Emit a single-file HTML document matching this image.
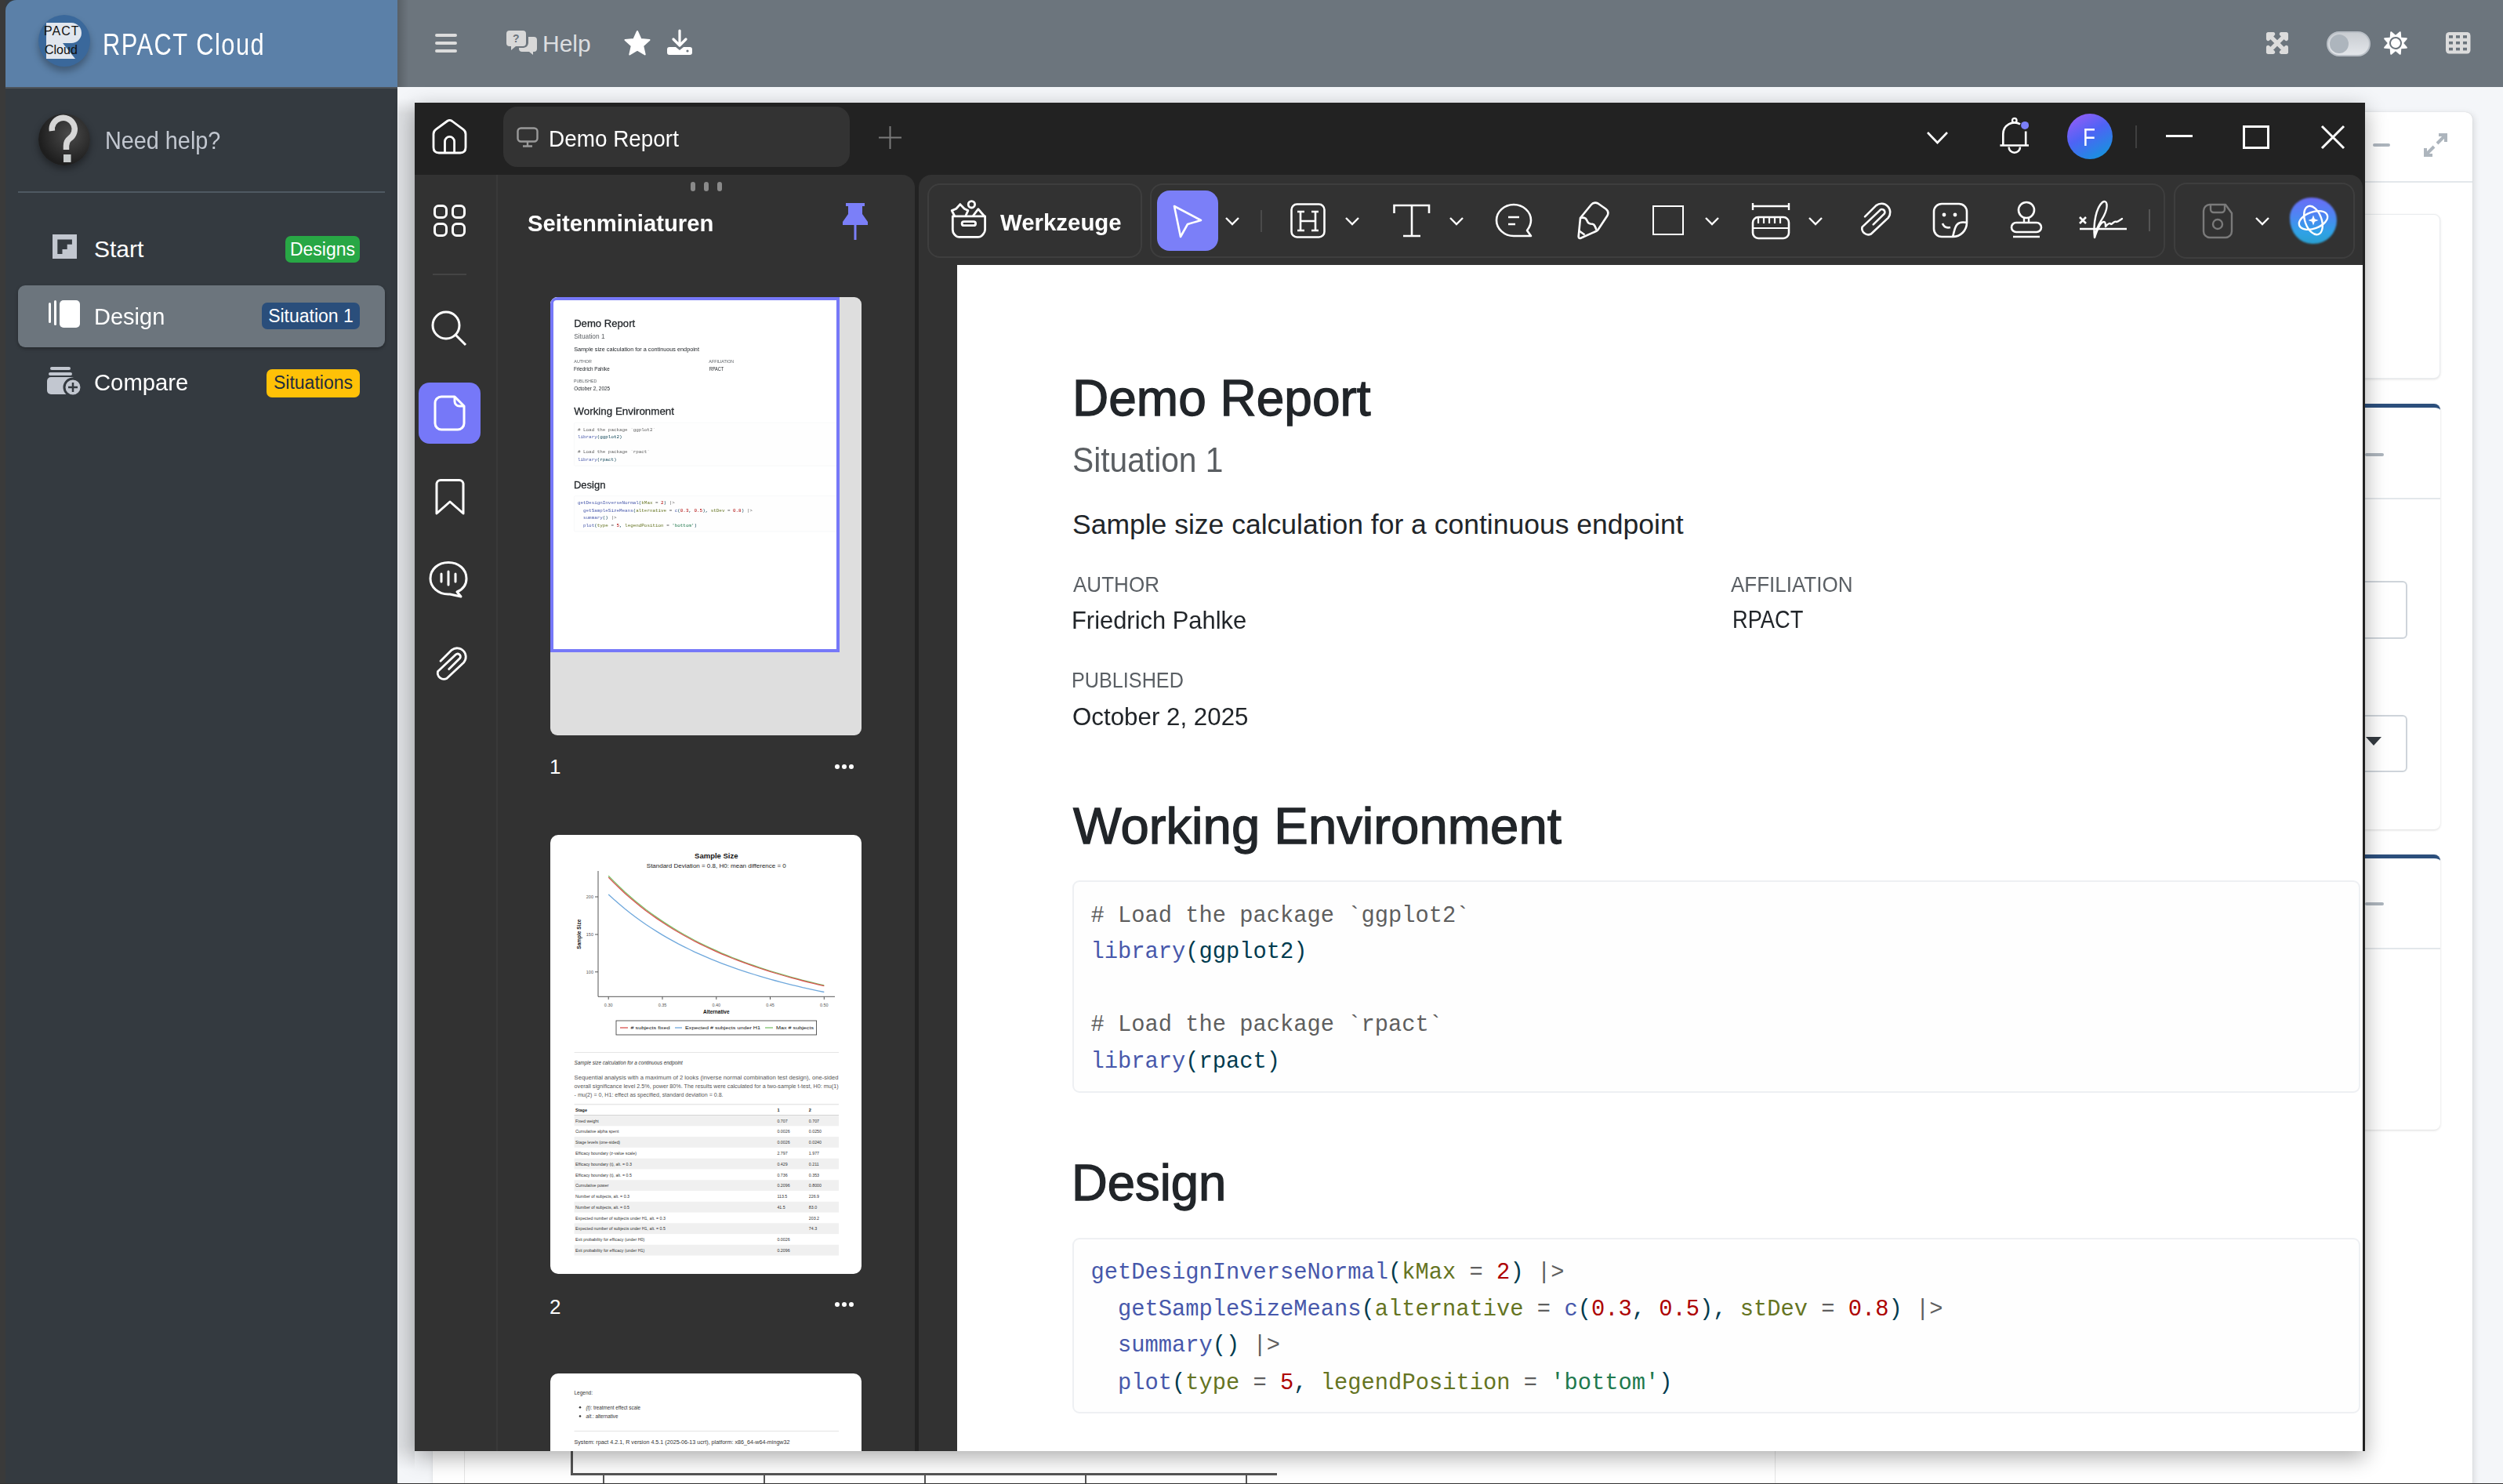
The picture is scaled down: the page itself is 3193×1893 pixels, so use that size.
<!DOCTYPE html>
<html><head><meta charset="utf-8">
<style>
*{box-sizing:border-box;margin:0;padding:0}
html,body{width:3193px;height:1893px;overflow:hidden}
body{position:relative;background:#f4f6f9;font-family:"Liberation Sans",sans-serif}
.a{position:absolute}
.t{position:absolute;white-space:nowrap;line-height:1}
.mono{font-family:"Liberation Mono",monospace}
svg{position:absolute;overflow:visible}
.badge{position:absolute;border-radius:7px;font-size:23px;line-height:34px;text-align:center;color:#fff}
</style></head><body>
<!-- left strip -->
<div class="a" style="left:0;top:0;width:8px;height:1893px;background:#3a3a3a"></div>
<!-- sidebar -->
<div class="a" style="left:7px;top:0;width:500px;height:1893px;background:#343a40"></div>
<div class="a" style="left:7px;top:0;width:500px;height:111px;background:#5b80a8;border-top-left-radius:14px"></div>
<div class="a" style="left:7px;top:111px;width:500px;height:2px;background:#4d5359"></div>
<!-- logo -->
<div class="a" style="left:49px;top:19px;width:66px;height:66px;border-radius:50%;background:#3a689b;box-shadow:0 6px 10px rgba(0,0,0,.3);overflow:hidden">
  <svg width="66" height="66" style="left:0;top:0"><path d="M10 10 H42 A13 13 0 0 1 42 36 H31 L47 56 H10 Z" fill="#e1e6ee"/></svg>
  <div class="t" style="left:7px;top:13px;font-size:16px;color:#111;letter-spacing:1px">PACT</div>
  <div class="t" style="left:8px;top:37px;font-size:16px;color:#111">Cloud</div>
</div>
<div class="t" style="left:131px;top:37px;font-size:39px;color:#fff;letter-spacing:1.9px;transform:scaleX(.79);transform-origin:0 0">RPACT Cloud</div>
<!-- need help -->
<div class="a" style="left:49px;top:145px;width:66px;height:66px;border-radius:50%;background:radial-gradient(circle at 60% 40%,#4a4a4a,#1e1e1e 70%);box-shadow:0 4px 10px rgba(0,0,0,.4)"></div>
<svg width="66" height="66" style="left:49px;top:145px"><path d="M17.4 22 A14.5 14.5 0 1 1 39.5 32 Q35.5 35 35.5 41 V46" fill="none" stroke="#d6d6d6" stroke-width="7.5"/><rect x="32" y="52" width="9.5" height="10" fill="#c8cccc"/></svg>
<div class="t" style="left:134px;top:163px;font-size:32px;color:#c2c7d0;transform:scaleX(.9);transform-origin:0 0">Need help?</div>
<div class="a" style="left:23px;top:244px;width:468px;height:2px;background:#4f5962"></div>
<!-- nav items -->
<svg width="32" height="32" style="left:67px;top:299px"><rect x="0" y="0" width="31" height="31" fill="#c2c7d0"/><path d="M6.3 6.5 H24.9 V12.7 H18.7 V18.9 H12.5 V25 H6.3 Z" fill="#343a40"/></svg>
<div class="t" style="left:120px;top:303px;font-size:30px;color:#fff">Start</div>
<div class="badge" style="left:364px;top:301px;width:95px;background:#28a745">Designs</div>

<div class="a" style="left:23px;top:364px;width:468px;height:79px;border-radius:9px;background:#6c757d;box-shadow:0 2px 4px rgba(0,0,0,.3)"></div>
<svg width="42" height="36" style="left:62px;top:383px"><rect x="0" y="3" width="3" height="26" rx="1.5" fill="#fff"/><rect x="7" y="0" width="3" height="32" rx="1.5" fill="#fff"/><rect x="14" y="0" width="26" height="35" rx="5" fill="#fff"/></svg>
<div class="t" style="left:120px;top:389px;font-size:30px;color:#fff;transform:scaleX(.967);transform-origin:0 0">Design</div>
<div class="badge" style="left:334px;top:386px;width:125px;background:#2a4e7b">Situation 1</div>

<svg width="46" height="36" style="left:60px;top:468px"><rect x="4" y="0" width="26" height="4" rx="2" fill="#c2c7d0"/><rect x="2" y="7" width="30" height="4" rx="2" fill="#c2c7d0"/><rect x="0" y="13" width="36" height="22" rx="5" fill="#c2c7d0"/><circle cx="33" cy="26" r="11" fill="#c2c7d0" stroke="#343a40" stroke-width="3"/><path d="M33 20 V32 M27 26 H39" stroke="#343a40" stroke-width="2.5"/></svg>
<div class="t" style="left:120px;top:473px;font-size:30px;color:#fff;transform:scaleX(.975);transform-origin:0 0">Compare</div>
<div class="badge" style="left:340px;top:471px;width:119px;height:36px;background:#ffc107;color:#1f2d3d">Situations</div>

<!-- top nav -->
<div class="a" style="left:507px;top:0;width:2686px;height:111px;background:#6c757d"></div>
<div class="a" style="left:507px;top:0;width:14px;height:111px;background:linear-gradient(90deg,rgba(0,0,0,.18),rgba(0,0,0,0))"></div>
<svg width="28" height="24" style="left:555px;top:43px"><path d="M2 2 H26 M2 12 H26 M2 22 H26" stroke="#dcdcdc" stroke-width="4" stroke-linecap="round"/></svg>
<svg width="40" height="32" style="left:646px;top:39px"><path d="M4 0 H21 A4 4 0 0 1 25 4 V16 A4 4 0 0 1 21 20 H12 L6 25 V20 H4 A4 4 0 0 1 0 16 V4 A4 4 0 0 1 4 0Z" fill="#d8d8d8"/><path d="M28 8 H35 A4 4 0 0 1 39 12 V23 A4 4 0 0 1 35 27 H34 V31 L29 27 H20 A4 4 0 0 1 16 23 V22 H22 A7 7 0 0 0 28 16Z" fill="#d8d8d8"/><text x="8" y="15" font-size="14" font-weight="bold" fill="#6c757d" font-family="Liberation Sans">?</text></svg>
<div class="t" style="left:692px;top:41px;font-size:30px;color:#dcdee0">Help</div>
<svg width="34" height="32" style="left:796px;top:39px"><path d="M17 1 L21.5 11 L32.5 12 L24.2 19.4 L26.7 30.5 L17 24.6 L7.3 30.5 L9.8 19.4 L1.5 12 L12.5 11 Z" fill="#fff" stroke="#fff" stroke-width="2" stroke-linejoin="round"/></svg>
<svg width="34" height="32" style="left:851px;top:39px"><path d="M16 0 V18 M8 11 L16 19 L24 11" stroke="#fff" stroke-width="3.2" fill="none" stroke-linecap="round" stroke-linejoin="round"/><path d="M3 21 H11 L16 25 L21 21 H29 A3 3 0 0 1 32 24 V28 A3 3 0 0 1 29 31 H3 A3 3 0 0 1 0 28 V24 A3 3 0 0 1 3 21Z" fill="#fff"/><circle cx="26" cy="26" r="1.6" fill="#6c757d"/></svg>
<!-- right nav icons -->
<svg width="28" height="28" viewBox="-16 16 480 480" style="left:2891px;top:41px"><path fill="#dcdcdc" stroke="#dcdcdc" stroke-width="34" stroke-linejoin="round" d="M448 344v112a23.94 23.94 0 0 1-24 24H312c-21.39 0-32.09-25.9-17-41l36.2-36.2L224 295.6 116.77 402.9 153 439c15.09 15.1 4.39 41-17 41H24a23.94 23.94 0 0 1-24-24V344c0-21.4 25.89-32.1 41-17l36.19 36.2L184.46 256 77.18 148.7 41 185c-15.1 15.1-41 4.4-41-17V56a23.94 23.94 0 0 1 24-24h112c21.39 0 32.09 25.9 17 41l-36.2 36.2L224 216.4l107.23-107.3L295 73c-15.09-15.1-4.39-41 17-41h112a23.94 23.94 0 0 1 24 24v112c0 21.4-25.89 32.1-41 17l-36.19-36.2L263.54 256l107.28 107.3L407 327.1c15.1-15.2 41-4.5 41 16.9z"/></svg>
<div class="a" style="left:2968px;top:40px;width:56px;height:32px;border-radius:16px;background:linear-gradient(180deg,#c9cdd2,#e3e6ea);border:2px solid #b9bfc6"></div>
<div class="a" style="left:2972px;top:44px;width:24px;height:24px;border-radius:50%;background:#adb5bd"></div>
<svg width="32" height="32" viewBox="0 0 512 512" style="left:3040px;top:39px"><path transform="rotate(22.5 256 256)" fill="#fff" d="M256 160c-52.9 0-96 43.1-96 96s43.1 96 96 96 96-43.1 96-96-43.1-96-96-96zm246.4 80.5l-94.7-47.3 33.5-100.4c4.5-13.6-8.4-26.5-21.9-21.9l-100.4 33.5-47.4-94.8c-6.4-12.8-24.6-12.8-31 0l-47.3 94.7L92.7 70.8c-13.6-4.5-26.5 8.4-21.9 21.9l33.5 100.4-94.7 47.4c-12.8 6.4-12.8 24.6 0 31l94.7 47.3-33.5 100.5c-4.5 13.6 8.4 26.5 21.9 21.9l100.4-33.5 47.3 94.7c6.4 12.8 24.6 12.8 31 0l47.3-94.7 100.4 33.5c13.6 4.5 26.5-8.4 21.9-21.9l-33.5-100.4 94.7-47.3c13-6.5 13-24.7.2-31.1zm-155.9 106c-49.9 49.9-131.1 49.9-181 0-49.9-49.9-49.9-131.1 0-181 49.9-49.9 131.1-49.9 181 0 49.9 49.9 49.9 131.1 0 181z"/></svg>
<svg width="32" height="28" style="left:3120px;top:41px"><rect x="0" y="0" width="31.5" height="27.5" rx="4.5" fill="#dcdcdc"/><g fill="#6c757d"><rect x="4" y="4.1" width="5" height="3.6"/><rect x="13" y="4.1" width="5" height="3.6"/><rect x="22" y="4.1" width="5" height="3.6"/><rect x="4" y="11.9" width="5" height="3.6"/><rect x="13" y="11.9" width="5" height="3.6"/><rect x="22" y="11.9" width="5" height="3.6"/><rect x="4" y="19.8" width="5" height="3.6"/><rect x="13" y="19.8" width="5" height="3.6"/><rect x="22" y="19.8" width="5" height="3.6"/></g></svg>

<!-- background content cards -->
<div class="a" style="left:507px;top:111px;width:2686px;height:1782px;background:#f4f6f9"></div>
<div class="a" style="left:552px;top:143px;width:2602px;height:1760px;background:#fff;border-radius:9px 9px 0 0;box-shadow:0 0 1px rgba(0,0,0,.2),2px 2px 8px rgba(0,0,0,.12)"></div>
<div class="a" style="left:552px;top:231px;width:2602px;height:2px;background:#e3e7eb"></div>
<div class="a" style="left:3027px;top:183px;width:22px;height:4px;border-radius:2px;background:#adb5bd"></div>
<svg width="30" height="30" style="left:3092px;top:170px"><path d="M17 13 L27 3 M19 2 H28 V11 M13 17 L3 27 M2 19 V28 H11" stroke="#adb5bd" stroke-width="4" fill="none"/></svg>
<div class="a" style="left:2600px;top:273px;width:513px;height:210px;border-radius:8px;background:#fff;border:1px solid #e9ecef;box-shadow:0 1px 3px rgba(0,0,0,.12)"></div>
<div class="a" style="left:2600px;top:515px;width:513px;height:543px;border-radius:8px;background:#fff;border-top:5px solid #2c4f7c;box-shadow:0 1px 3px rgba(0,0,0,.15)"></div>
<div class="a" style="left:2600px;top:635px;width:513px;height:2px;background:#e3e7eb"></div>
<div class="a" style="left:3017px;top:578px;width:24px;height:4px;border-radius:2px;background:#adb5bd"></div>
<div class="a" style="left:2650px;top:741px;width:421px;height:74px;border-radius:6px;border:2px solid #ced4da;background:#fff"></div>
<div class="a" style="left:2650px;top:912px;width:421px;height:73px;border-radius:6px;border:2px solid #ced4da;background:#fff"></div>
<svg width="20" height="12" style="left:3018px;top:940px"><path d="M0 0 H20 L10 11Z" fill="#343a40"/></svg>
<div class="a" style="left:2600px;top:1090px;width:513px;height:351px;border-radius:8px;background:#fff;border-top:5px solid #2c4f7c;box-shadow:0 1px 3px rgba(0,0,0,.15)"></div>
<div class="a" style="left:2600px;top:1209px;width:513px;height:2px;background:#e3e7eb"></div>
<div class="a" style="left:3017px;top:1151px;width:24px;height:4px;border-radius:2px;background:#adb5bd"></div>
<div class="a" style="left:592px;top:1851px;width:1px;height:42px;background:#e6e6e6"></div>
<div class="a" style="left:2264px;top:1851px;width:1px;height:42px;background:#e6e6e6"></div>
<div class="a" style="left:728px;top:1800px;width:3px;height:82px;background:#555"></div>
<div class="a" style="left:728px;top:1879px;width:901px;height:3px;background:#555"></div>
<div class="a" style="left:769px;top:1881px;width:2px;height:12px;background:#555"></div>
<div class="a" style="left:974px;top:1881px;width:2px;height:12px;background:#555"></div>
<div class="a" style="left:1179px;top:1881px;width:2px;height:12px;background:#555"></div>
<div class="a" style="left:1384px;top:1881px;width:2px;height:12px;background:#555"></div>
<div class="a" style="left:1589px;top:1881px;width:2px;height:12px;background:#555"></div>

<div class="a" style="left:508px;top:125px;width:21px;height:1750px;background:linear-gradient(180deg,rgba(0,0,0,0) 0,rgba(0,0,0,.09) 20px,rgba(0,0,0,.09) 1720px,rgba(0,0,0,0) 1750px)"></div>
<!-- WINDOW_START -->
<div class="a" id="win" style="left:529px;top:131px;width:2488px;height:1720px;background:#222222;box-shadow:0 8px 26px rgba(0,0,0,.33)"></div>
<!-- title bar -->
<svg width="46" height="46" style="left:551px;top:151px"><path d="M2 20 Q2 16.4 5 14.2 L19.5 3.5 Q22.6 1.3 25.7 3.5 L40 14.2 Q43 16.4 43 20 V37 Q43 44 36 44 H9 Q2 44 2 37 Z" fill="none" stroke="#fff" stroke-width="2.8" stroke-linejoin="round"/><path d="M16.5 44 V29.5 A6 6 0 0 1 28.6 29.5 V44" fill="none" stroke="#fff" stroke-width="2.8"/></svg>
<div class="a" style="left:642px;top:136px;width:442px;height:77px;border-radius:18px;background:#333"></div>
<svg width="28" height="26" style="left:659px;top:162px"><rect x="1.5" y="1.5" width="25" height="17" rx="4" fill="none" stroke="#9a9a9a" stroke-width="2.4"/><path d="M14 19 V24 M8 24.5 H20" stroke="#9a9a9a" stroke-width="2.4"/></svg>
<div class="t" id="tabtxt" style="left:700px;top:162px;font-size:30px;color:#fff;transform:scaleX(.93);transform-origin:0 0">Demo Report</div>
<svg width="32" height="32" style="left:1120px;top:160px"><path d="M15.5 1 V30 M1 15.5 H30" stroke="#7a7a7a" stroke-width="2"/></svg>
<svg width="30" height="18" style="left:2457px;top:167px"><path d="M2 2 L14.5 15 L27 2" fill="none" stroke="#fff" stroke-width="2.6"/></svg>
<svg width="40" height="50" style="left:2550px;top:149px"><path d="M5.3 36.5 V22 A14.5 14.5 0 0 1 27.05 9.44 M34.2 18.6 V36.5 M1.4 36.5 H38 M12.6 38.5 A7.2 7.2 0 0 0 27 38.5" fill="none" stroke="#fff" stroke-width="2.6"/><circle cx="19.8" cy="4.6" r="2.8" fill="none" stroke="#fff" stroke-width="2.2"/><circle cx="33.1" cy="10.9" r="5" fill="#7b7ff8"/></svg>
<div class="a" style="left:2637px;top:145px;width:58px;height:58px;border-radius:50%;background:linear-gradient(150deg,#a15cf6 0%,#4e63f5 45%,#0a9ed8 100%)"></div>
<div class="t" style="left:2657px;top:159px;font-size:32px;color:#fff;transform:scaleX(.82);transform-origin:0 0">F</div>
<div class="a" style="left:2724px;top:160px;width:2px;height:29px;background:#3f3f3f"></div>
<div class="a" style="left:2763px;top:172px;width:34px;height:3px;background:#fff"></div>
<div class="a" style="left:2861px;top:160px;width:34px;height:30px;border:3px solid #fff"></div>
<svg width="30" height="30" style="left:2961px;top:160px"><path d="M1 1 L29 29 M29 1 L1 29" stroke="#fff" stroke-width="3"/></svg>
<!-- left rail + panel -->
<div class="a" style="left:529px;top:223px;width:638px;height:1628px;background:#323232;border-top-right-radius:16px"></div>
<div class="a" style="left:633px;top:223px;width:2px;height:1628px;background:#393939"></div>
<svg width="42" height="42" style="left:553px;top:261px"><g fill="none" stroke="#fff" stroke-width="3"><rect x="1.5" y="1.5" width="15" height="15" rx="5"/><rect x="24.5" y="1.5" width="15" height="15" rx="5"/><rect x="1.5" y="24.5" width="15" height="15" rx="5"/><rect x="24.5" y="24.5" width="15" height="15" rx="5"/></g></svg>
<div class="a" style="left:552px;top:349px;width:43px;height:2px;background:#444"></div>
<svg width="46" height="46" style="left:550px;top:396px"><circle cx="19" cy="19" r="17" fill="none" stroke="#fff" stroke-width="3"/><path d="M31 31 L44 44" stroke="#fff" stroke-width="3"/></svg>
<div class="a" style="left:534px;top:488px;width:79px;height:78px;border-radius:14px;background:#7678f8"></div>
<svg width="42" height="46" style="left:553px;top:504px"><path d="M10 2 H27 L39 14 V36 A8 8 0 0 1 31 44 H10 A8 8 0 0 1 2 36 V10 A8 8 0 0 1 10 2 Z" fill="none" stroke="#fff" stroke-width="3" stroke-linejoin="round"/><path d="M27 2 V8 A6 6 0 0 0 33 14 H39" fill="none" stroke="#fff" stroke-width="3"/></svg>
<svg width="40" height="48" style="left:555px;top:611px"><path d="M2 6 A5 5 0 0 1 7 1.5 H31 A5 5 0 0 1 36 6 V44 L19 29 L2 44 Z" fill="none" stroke="#fff" stroke-width="3" stroke-linejoin="round"/></svg>
<svg width="52" height="50" style="left:547px;top:715px"><path d="M25 2.5 C38 2.5 48 11 48 23 C48 31 43 37 36 40 L41 46 L27 43 C26 43 25.5 43 25 43 C12 43 2 34 2 23 C2 11 12 2.5 25 2.5 Z" fill="none" stroke="#fff" stroke-width="3" stroke-linejoin="round"/><path d="M16 17 V27 M25 14 V31 M34 17 V27" stroke="#fff" stroke-width="3" stroke-linecap="round"/></svg>
<svg width="46" height="50" style="left:553px;top:824px"><path d="M9 19.3 L23.3 5.1 A11.1 11.1 0 0 1 38.7 20.9 L16.8 41.5 A8 8 0 0 1 5.5 32.6 L27.8 11.6 A3.6 3.6 0 0 1 33.8 15.6 L19.7 29.4" fill="none" stroke="#fff" stroke-width="2.8" stroke-linecap="round" stroke-linejoin="round"/></svg>
<!-- panel header -->
<g></g>
<div class="a" style="left:881px;top:232px;width:6px;height:12px;border-radius:3px;background:#8a8a8a"></div>
<div class="a" style="left:898px;top:232px;width:6px;height:12px;border-radius:3px;background:#8a8a8a"></div>
<div class="a" style="left:915px;top:232px;width:6px;height:12px;border-radius:3px;background:#8a8a8a"></div>
<div class="t" id="seit" style="left:673px;top:270px;font-size:30px;font-weight:bold;color:#fff;transform:scaleX(.975);transform-origin:0 0">Seitenminiaturen</div>
<svg width="34" height="48" style="left:1074px;top:259px"><path d="M5 0 H29 V4 H26 V14 L33 24 V28 H1 V24 L8 14 V4 H5 Z" fill="#7b7ff8"/><path d="M17 28 V47" stroke="#7b7ff8" stroke-width="3"/></svg>
<!-- THUMBS -->
<div class="a" style="left:702px;top:379px;width:397px;height:559px;border-radius:9px;background:#dedede;overflow:hidden">
<div class="a" style="left:0;top:0;width:369px;height:453px;background:#fff;overflow:hidden"><div class="a" style="left:0;top:-1px;width:1793px;height:2210px;transform:scale(0.205);transform-origin:0 0">
<div class="t" id="td1" style="left:147px;top:137.8px;font-size:64px;color:#212529;font-weight:normal;font-family:'Liberation Sans';-webkit-text-stroke:1.3px #212529;">Demo Report</div>
<div class="t" id="td2" style="left:147px;top:225.9px;font-size:45px;color:#5a5e62;font-weight:normal;font-family:'Liberation Sans';transform:scaleX(0.905);transform-origin:0 0;">Situation 1</div>
<div class="t" id="td3" style="left:147px;top:313.9px;font-size:35.5px;color:#212529;font-weight:normal;font-family:'Liberation Sans';">Sample size calculation for a continuous endpoint</div>
<div class="t" id="td4" style="left:148px;top:393.9px;font-size:28px;color:#5a5f64;font-weight:normal;font-family:'Liberation Sans';transform:scaleX(0.93);transform-origin:0 0;">AUTHOR</div>
<div class="t" id="td5" style="left:146px;top:436.5px;font-size:32px;color:#212529;font-weight:normal;font-family:'Liberation Sans';transform:scaleX(0.965);transform-origin:0 0;">Friedrich Pahlke</div>
<div class="t" id="td6" style="left:987px;top:393.9px;font-size:28px;color:#5a5f64;font-weight:normal;font-family:'Liberation Sans';transform:scaleX(0.928);transform-origin:0 0;">AFFILIATION</div>
<div class="t" id="td7" style="left:989px;top:437.1px;font-size:31.3px;color:#212529;font-weight:normal;font-family:'Liberation Sans';transform:scaleX(0.87);transform-origin:0 0;">RPACT</div>
<div class="t" id="td8" style="left:146px;top:515.8px;font-size:28px;color:#5a5f64;font-weight:normal;font-family:'Liberation Sans';transform:scaleX(0.9);transform-origin:0 0;">PUBLISHED</div>
<div class="t" id="td9" style="left:147px;top:559.9px;font-size:32px;color:#212529;font-weight:normal;font-family:'Liberation Sans';transform:scaleX(0.978);transform-origin:0 0;">October 2, 2025</div>
<div class="t" id="td10" style="left:148px;top:684.2px;font-size:64px;color:#212529;font-weight:normal;font-family:'Liberation Sans';-webkit-text-stroke:1.3px #212529;transform:scaleX(1.02);transform-origin:0 0;">Working Environment</div>
<div class="a" style="left:147px;top:785px;width:1643px;height:271px;border:2px solid #eef0f3;border-radius:9px;background:#fefefe"></div>
<div class="t" style="left:170.5px;top:817.0px;font-size:28.75px;font-family:'Liberation Mono';white-space:pre"><span style="color:#5e5e5e"># Load the package `ggplot2`</span></div>
<div class="t" style="left:170.5px;top:863.0px;font-size:28.75px;font-family:'Liberation Mono';white-space:pre"><span style="color:#4758ab">library</span><span style="color:#003b4f">(ggplot2)</span></div>
<div class="t" style="left:170.5px;top:956.0px;font-size:28.75px;font-family:'Liberation Mono';white-space:pre"><span style="color:#5e5e5e"># Load the package `rpact`</span></div>
<div class="t" style="left:170.5px;top:1003.0px;font-size:28.75px;font-family:'Liberation Mono';white-space:pre"><span style="color:#4758ab">library</span><span style="color:#003b4f">(rpact)</span></div>
<div class="t" id="td11" style="left:146px;top:1139.3px;font-size:64px;color:#212529;font-weight:normal;font-family:'Liberation Sans';-webkit-text-stroke:1.3px #212529;transform:scaleX(0.99);transform-origin:0 0;">Design</div>
<div class="a" style="left:147px;top:1241px;width:1643px;height:224px;border:2px solid #eef0f3;border-radius:9px;background:#fefefe"></div>
<div class="t" style="left:170.5px;top:1272.0px;font-size:28.75px;font-family:'Liberation Mono';white-space:pre"><span style="color:#4758ab">getDesignInverseNormal</span><span style="color:#003b4f">(</span><span style="color:#657422">kMax</span><span style="color:#5e5e5e"> = </span><span style="color:#ad0000">2</span><span style="color:#003b4f">)</span><span style="color:#5e5e5e"> |&gt;</span></div>
<div class="t" style="left:170.5px;top:1319.0px;font-size:28.75px;font-family:'Liberation Mono';white-space:pre"><span style="color:#4758ab">  getSampleSizeMeans</span><span style="color:#003b4f">(</span><span style="color:#657422">alternative</span><span style="color:#5e5e5e"> = </span><span style="color:#4758ab">c</span><span style="color:#003b4f">(</span><span style="color:#ad0000">0.3</span><span style="color:#003b4f">, </span><span style="color:#ad0000">0.5</span><span style="color:#003b4f">), </span><span style="color:#657422">stDev</span><span style="color:#5e5e5e"> = </span><span style="color:#ad0000">0.8</span><span style="color:#003b4f">)</span><span style="color:#5e5e5e"> |&gt;</span></div>
<div class="t" style="left:170.5px;top:1365.0px;font-size:28.75px;font-family:'Liberation Mono';white-space:pre"><span style="color:#4758ab">  summary</span><span style="color:#003b4f">()</span><span style="color:#5e5e5e"> |&gt;</span></div>
<div class="t" style="left:170.5px;top:1413.0px;font-size:28.75px;font-family:'Liberation Mono';white-space:pre"><span style="color:#4758ab">  plot</span><span style="color:#003b4f">(</span><span style="color:#657422">type</span><span style="color:#5e5e5e"> = </span><span style="color:#ad0000">5</span><span style="color:#003b4f">, </span><span style="color:#657422">legendPosition</span><span style="color:#5e5e5e"> = </span><span style="color:#20794d">'bottom'</span><span style="color:#003b4f">)</span></div>
</div></div>
<div class="a" style="left:0;top:0;width:369px;height:453px;border:4px solid #7678f8;border-radius:8px 0 0 0"></div>
</div>
<div class="t" style="left:701px;top:965px;font-size:26px;color:#fff">1</div>
<div class="a" style="left:1065px;top:975px;width:6px;height:6px;border-radius:50%;background:#fff"></div>
<div class="a" style="left:1074px;top:975px;width:6px;height:6px;border-radius:50%;background:#fff"></div>
<div class="a" style="left:1083px;top:975px;width:6px;height:6px;border-radius:50%;background:#fff"></div>
<div class="a" style="left:702px;top:1065px;width:397px;height:560px;border-radius:10px;background:#fff;overflow:hidden">
<svg width="397" height="560" style="left:0;top:0" font-family="Liberation Sans"><text x="211.8" y="30" font-size="9.5" font-weight="bold" text-anchor="middle" fill="#111">Sample Size</text><text x="211.8" y="41.5" font-size="7" text-anchor="middle" fill="#222" textLength="178" lengthAdjust="spacingAndGlyphs">Standard Deviation = 0.8, H0: mean difference = 0</text><path d="M61 46 V206.3 H363" fill="none" stroke="#555" stroke-width="1"/><path d="M57 79 H61" stroke="#555" stroke-width="1"/><text x="55" y="81.2" font-size="5.5" text-anchor="end" fill="#555">200</text><path d="M57 127 H61" stroke="#555" stroke-width="1"/><text x="55" y="129.2" font-size="5.5" text-anchor="end" fill="#555">150</text><path d="M57 174.8 H61" stroke="#555" stroke-width="1"/><text x="55" y="177.0" font-size="5.5" text-anchor="end" fill="#555">100</text><path d="M74.2 206.3 V210" stroke="#555" stroke-width="1"/><text x="74.2" y="219" font-size="5.5" text-anchor="middle" fill="#555">0.30</text><path d="M143 206.3 V210" stroke="#555" stroke-width="1"/><text x="143" y="219" font-size="5.5" text-anchor="middle" fill="#555">0.35</text><path d="M211.8 206.3 V210" stroke="#555" stroke-width="1"/><text x="211.8" y="219" font-size="5.5" text-anchor="middle" fill="#555">0.40</text><path d="M280.5 206.3 V210" stroke="#555" stroke-width="1"/><text x="280.5" y="219" font-size="5.5" text-anchor="middle" fill="#555">0.45</text><path d="M349.3 206.3 V210" stroke="#555" stroke-width="1"/><text x="349.3" y="219" font-size="5.5" text-anchor="middle" fill="#555">0.50</text><text x="211.8" y="228" font-size="6.5" font-weight="bold" text-anchor="middle" fill="#111">Alternative</text><text x="0" y="0" font-size="6.5" font-weight="bold" text-anchor="middle" fill="#111" transform="translate(39,126.7) rotate(-90)">Sample Size</text><polyline points="74.2,75.9 81.1,82.3 88.0,88.3 94.8,94.0 101.7,99.5 108.6,104.7 115.5,109.7 122.3,114.5 129.2,119.0 136.1,123.4 143.0,127.6 149.9,131.6 156.7,135.4 163.6,139.1 170.5,142.6 177.4,146.0 184.2,149.3 191.1,152.4 198.0,155.4 204.9,158.3 211.8,161.1 218.6,163.8 225.5,166.4 232.4,168.9 239.3,171.3 246.1,173.6 253.0,175.8 259.9,178.0 266.8,180.1 273.6,182.1 280.5,184.1 287.4,186.0 294.3,187.8 301.2,189.6 308.0,191.3 314.9,192.9 321.8,194.6 328.7,196.1 335.5,197.6 342.4,199.1 349.3,200.5" fill="none" stroke="#6fa8dc" stroke-width="1.3"/><polyline points="74.2,52.2 81.1,59.3 88.0,66.0 94.8,72.5 101.7,78.6 108.6,84.5 115.5,90.1 122.3,95.4 129.2,100.5 136.1,105.4 143.0,110.1 149.9,114.6 156.7,118.9 163.6,123.0 170.5,127.0 177.4,130.8 184.2,134.5 191.1,138.0 198.0,141.4 204.9,144.6 211.8,147.7 218.6,150.8 225.5,153.7 232.4,156.5 239.3,159.2 246.1,161.8 253.0,164.3 259.9,166.7 266.8,169.1 273.6,171.3 280.5,173.5 287.4,175.6 294.3,177.7 301.2,179.7 308.0,181.6 314.9,183.5 321.8,185.3 328.7,187.0 335.5,188.7 342.4,190.4 349.3,192.0" fill="none" stroke="#7cc36b" stroke-width="1.3"/><polyline points="74.2,54.1 81.1,61.1 88.0,67.8 94.8,74.2 101.7,80.3 108.6,86.1 115.5,91.7 122.3,97.0 129.2,102.0 136.1,106.9 143.0,111.5 149.9,116.0 156.7,120.2 163.6,124.3 170.5,128.3 177.4,132.0 184.2,135.7 191.1,139.1 198.0,142.5 204.9,145.7 211.8,148.8 218.6,151.8 225.5,154.7 232.4,157.5 239.3,160.1 246.1,162.7 253.0,165.2 259.9,167.6 266.8,170.0 273.6,172.2 280.5,174.4 287.4,176.5 294.3,178.5 301.2,180.5 308.0,182.4 314.9,184.2 321.8,186.0 328.7,187.8 335.5,189.4 342.4,191.1 349.3,192.7" fill="none" stroke="#d9534f" stroke-width="1.3"/><rect x="84" y="237" width="255.6" height="18" fill="none" stroke="#333" stroke-width="0.8"/><path d="M89 246 H99" stroke="#d9534f" stroke-width="1.3"/><text x="102.5" y="248.3" font-size="6.2" fill="#111" textLength="50" lengthAdjust="spacingAndGlyphs"># subjects fixed</text><path d="M159 246 H168" stroke="#6fa8dc" stroke-width="1.3"/><text x="172" y="248.3" font-size="6.2" fill="#111" textLength="96" lengthAdjust="spacingAndGlyphs">Expected # subjects under H1</text><path d="M274 246 H284" stroke="#7cc36b" stroke-width="1.3"/><text x="288" y="248.3" font-size="6.2" fill="#111" textLength="48" lengthAdjust="spacingAndGlyphs">Max # subjects</text><path d="M30.6 277.5 H368" stroke="#e6e6e6" stroke-width="1"/><text x="30.6" y="293" font-size="6.3" font-style="italic" fill="#333">Sample size calculation for a continuous endpoint</text><text x="30.6" y="311.6" font-size="6.3" fill="#555" textLength="337" lengthAdjust="spacingAndGlyphs">Sequential analysis with a maximum of 2 looks (inverse normal combination test design), one-sided</text><text x="30.6" y="322.6" font-size="6.3" fill="#555" textLength="337" lengthAdjust="spacingAndGlyphs">overall significance level 2.5%, power 80%. The results were calculated for a two-sample t-test, H0: mu(1)</text><text x="30.6" y="333.5" font-size="6.3" fill="#555" textLength="190" lengthAdjust="spacingAndGlyphs">- mu(2) = 0, H1: effect as specified, standard deviation = 0.8.</text><path d="M30.6 343.8 H368" stroke="#dcdcdc" stroke-width="1"/><text x="32" y="353" font-size="5.5" font-weight="bold" fill="#222">Stage</text><text x="289.4" y="353" font-size="5.5" font-weight="bold" fill="#222">1</text><text x="329.8" y="353" font-size="5.5" font-weight="bold" fill="#222">2</text><path d="M30.6 357.6 H368" stroke="#bbb" stroke-width="1"/><rect x="30.6" y="357.6" width="337.4" height="13.77" fill="#f0f0f0"/><text x="32" y="366.6" font-size="5.3" fill="#333">Fixed weight</text><text x="289.4" y="366.6" font-size="5.3" fill="#333">0.707</text><text x="329.8" y="366.6" font-size="5.3" fill="#333">0.707</text><text x="32" y="380.4" font-size="5.3" fill="#333">Cumulative alpha spent</text><text x="289.4" y="380.4" font-size="5.3" fill="#333">0.0026</text><text x="329.8" y="380.4" font-size="5.3" fill="#333">0.0250</text><rect x="30.6" y="385.1" width="337.4" height="13.77" fill="#f0f0f0"/><text x="32" y="394.1" font-size="5.3" fill="#333">Stage levels (one-sided)</text><text x="289.4" y="394.1" font-size="5.3" fill="#333">0.0026</text><text x="329.8" y="394.1" font-size="5.3" fill="#333">0.0240</text><text x="32" y="407.9" font-size="5.3" fill="#333">Efficacy boundary (z-value scale)</text><text x="289.4" y="407.9" font-size="5.3" fill="#333">2.797</text><text x="329.8" y="407.9" font-size="5.3" fill="#333">1.977</text><rect x="30.6" y="412.7" width="337.4" height="13.77" fill="#f0f0f0"/><text x="32" y="421.7" font-size="5.3" fill="#333">Efficacy boundary (t), alt. = 0.3</text><text x="289.4" y="421.7" font-size="5.3" fill="#333">0.429</text><text x="329.8" y="421.7" font-size="5.3" fill="#333">0.211</text><text x="32" y="435.5" font-size="5.3" fill="#333">Efficacy boundary (t), alt. = 0.5</text><text x="289.4" y="435.5" font-size="5.3" fill="#333">0.736</text><text x="329.8" y="435.5" font-size="5.3" fill="#333">0.353</text><rect x="30.6" y="440.2" width="337.4" height="13.77" fill="#f0f0f0"/><text x="32" y="449.2" font-size="5.3" fill="#333">Cumulative power</text><text x="289.4" y="449.2" font-size="5.3" fill="#333">0.2096</text><text x="329.8" y="449.2" font-size="5.3" fill="#333">0.8000</text><text x="32" y="463.0" font-size="5.3" fill="#333">Number of subjects, alt. = 0.3</text><text x="289.4" y="463.0" font-size="5.3" fill="#333">113.5</text><text x="329.8" y="463.0" font-size="5.3" fill="#333">226.9</text><rect x="30.6" y="467.8" width="337.4" height="13.77" fill="#f0f0f0"/><text x="32" y="476.8" font-size="5.3" fill="#333">Number of subjects, alt. = 0.5</text><text x="289.4" y="476.8" font-size="5.3" fill="#333">41.5</text><text x="329.8" y="476.8" font-size="5.3" fill="#333">83.0</text><text x="32" y="490.5" font-size="5.3" fill="#333">Expected number of subjects under H1, alt. = 0.3</text><text x="289.4" y="490.5" font-size="5.3" fill="#333"></text><text x="329.8" y="490.5" font-size="5.3" fill="#333">203.2</text><rect x="30.6" y="495.3" width="337.4" height="13.77" fill="#f0f0f0"/><text x="32" y="504.3" font-size="5.3" fill="#333">Expected number of subjects under H1, alt. = 0.5</text><text x="289.4" y="504.3" font-size="5.3" fill="#333"></text><text x="329.8" y="504.3" font-size="5.3" fill="#333">74.3</text><text x="32" y="518.1" font-size="5.3" fill="#333">Exit probability for efficacy (under H0)</text><text x="289.4" y="518.1" font-size="5.3" fill="#333">0.0026</text><text x="329.8" y="518.1" font-size="5.3" fill="#333"></text><rect x="30.6" y="522.8" width="337.4" height="13.77" fill="#f0f0f0"/><text x="32" y="531.8" font-size="5.3" fill="#333">Exit probability for efficacy (under H1)</text><text x="289.4" y="531.8" font-size="5.3" fill="#333">0.2096</text><text x="329.8" y="531.8" font-size="5.3" fill="#333"></text></svg></div>
<div class="t" style="left:701px;top:1654px;font-size:26px;color:#fff">2</div>
<div class="a" style="left:1065px;top:1661px;width:6px;height:6px;border-radius:50%;background:#fff"></div>
<div class="a" style="left:1074px;top:1661px;width:6px;height:6px;border-radius:50%;background:#fff"></div>
<div class="a" style="left:1083px;top:1661px;width:6px;height:6px;border-radius:50%;background:#fff"></div>
<div class="a" style="left:702px;top:1752px;width:397px;height:99px;border-radius:10px 10px 0 0;background:#fff;overflow:hidden">
<svg width="397" height="99" style="left:0;top:0" font-family="Liberation Sans"><text x="30.5" y="27" font-size="6.5" fill="#333">Legend:</text><circle cx="38" cy="43.3" r="1.3" fill="#333"/><text x="45.5" y="45.5" font-size="6.3" fill="#333"><tspan font-style="italic">(t)</tspan>: treatment effect scale</text><circle cx="38" cy="54.5" r="1.3" fill="#333"/><text x="45.5" y="56.7" font-size="6.3" fill="#333"><tspan font-style="italic">alt.</tspan>: alternative</text><path d="M30.5 73.6 H368" stroke="#e3e3e3" stroke-width="1"/><text x="30.5" y="90" font-size="6.3" fill="#333" textLength="275" lengthAdjust="spacingAndGlyphs">System: rpact 4.2.1, R version 4.5.1 (2025-06-13 ucrt), platform: x86_64-w64-mingw32</text></svg></div>
<!-- /THUMBS -->
<!-- content panel -->
<div class="a" style="left:1172px;top:223px;width:1842px;height:1628px;background:#323232;border-top-left-radius:16px;border-top-right-radius:16px"></div>
<!-- TOOLBAR -->
<div class="a" style="left:1183px;top:234px;width:274px;height:95px;border-radius:16px;border:2px solid #3e3e3e"></div>
<div class="a" style="left:1467px;top:234px;width:1295px;height:95px;border-radius:16px;border:2px solid #3e3e3e"></div>
<div class="a" style="left:2773px;top:233px;width:231px;height:97px;border-radius:16px;border:2px solid #3e3e3e"></div>
<svg width="48" height="50" style="left:1212px;top:255px"><g fill="none" stroke="#fff" stroke-width="2.8" stroke-linejoin="round" stroke-linecap="round"><path d="M5.5 20 L2.2 13.6 L7.8 11.2 L12.8 5.6 L18.2 11.2 L22.9 13.6 L20 20"/><circle cx="27.4" cy="5.8" r="4.2"/><path d="M29.5 20 L35.9 11.7 L43.5 20.5"/><path d="M3.3 20.9 H44.6 V38 Q44.6 41 42 44 L40 46 Q38.5 47.3 36 47.3 H11.5 Q9 47.3 7.5 46 L5.5 44 Q3.3 41.5 3.3 38 Z"/><rect x="15.1" y="27.7" width="17.5" height="5" rx="2.5"/></g></svg>
<div class="t" id="werk" style="left:1276px;top:269px;font-size:30px;font-weight:bold;color:#fff;transform:scaleX(.98);transform-origin:0 0">Werkzeuge</div>
<div class="a" style="left:1476px;top:243px;width:78px;height:77px;border-radius:16px;background:#7b7ff8"></div>
<svg width="40" height="46" style="left:1495px;top:260px"><path d="M3 3 L37 21 L20 26 L11 42 Z" fill="none" stroke="#fff" stroke-width="2.6" stroke-linejoin="round"/></svg>
<svg width="20" height="12" style="left:1562px;top:276px"><path d="M2 2 L10 10 L18 2" fill="none" stroke="#fff" stroke-width="2.4"/></svg>
<div class="a" style="left:1608px;top:268px;width:2px;height:28px;background:#4a4a4a"></div>
<svg width="46" height="46" style="left:1646px;top:259px"><rect x="1.5" y="1.5" width="42" height="42" rx="7" fill="none" stroke="#fff" stroke-width="2.6"/><path d="M13 11 V35 M32 11 V35 M13 23 H32 M9 11 H18 M27 11 H36 M9 35 H18 M27 35 H36" stroke="#fff" stroke-width="2.6"/></svg>
<svg width="20" height="12" style="left:1715px;top:276px"><path d="M2 2 L10 10 L18 2" fill="none" stroke="#fff" stroke-width="2.4"/></svg>
<svg width="48" height="44" style="left:1777px;top:260px"><path d="M1.5 12 V2 H46 V12 M24 2 V41 M13 41 H35" fill="none" stroke="#fff" stroke-width="2.6"/></svg>
<svg width="20" height="12" style="left:1848px;top:276px"><path d="M2 2 L10 10 L18 2" fill="none" stroke="#fff" stroke-width="2.4"/></svg>
<svg width="50" height="46" style="left:1907px;top:259px"><path d="M24 2 C36 2 46 11 46 22 C46 27 44 31 41 35 L46 42 H24 C12 42 2 33 2 22 C2 11 12 2 24 2 Z" fill="none" stroke="#fff" stroke-width="2.6" stroke-linejoin="round"/><path d="M17 18 H31 M17 27 H26" stroke="#fff" stroke-width="2.6"/></svg>
<svg width="46" height="50" style="left:2010px;top:256px"><path d="M6 22 L19.5 5.5 Q23.5 1 28.5 3.5 L38.5 10.5 Q43 14 40.5 19 L28.6 37 Q27.5 38.5 26 39 L7 47.5 Q3.5 49 3.7 45.5 Z" fill="none" stroke="#fff" stroke-width="2.6" stroke-linejoin="round"/><path d="M6 22 Q10 21 12.5 22.5 Q14 24 15 26.5 Q16 29 19 29.5 Q22.5 29.5 24 31.5 Q25.5 34 26.5 37.5" fill="none" stroke="#fff" stroke-width="2.6"/><path d="M4.5 38.5 L11.5 43.5" stroke="#fff" stroke-width="2.6"/></svg>
<div class="a" style="left:2108px;top:262px;width:40px;height:38px;border:2.6px solid #fff"></div>
<svg width="20" height="12" style="left:2174px;top:276px"><path d="M2 2 L10 10 L18 2" fill="none" stroke="#fff" stroke-width="2.4"/></svg>
<svg width="50" height="50" style="left:2234px;top:256px"><path d="M2 3 V12 M48 3 V12 M2 7 H48" stroke="#fff" stroke-width="2.4" fill="none"/><rect x="2" y="21" width="46" height="27" rx="7" fill="none" stroke="#fff" stroke-width="2.6"/><path d="M2 35 H48 M9 22 V29 M16 22 V29 M23 22 V29 M30 22 V29 M37 22 V29" stroke="#fff" stroke-width="2.2"/></svg>
<svg width="20" height="12" style="left:2306px;top:276px"><path d="M2 2 L10 10 L18 2" fill="none" stroke="#fff" stroke-width="2.4"/></svg>
<svg width="46" height="48" style="left:2370px;top:257px"><path d="M9 19.3 L23.3 5.1 A11.1 11.1 0 0 1 38.7 20.9 L16.8 41.5 A8 8 0 0 1 5.5 32.6 L27.8 11.6 A3.6 3.6 0 0 1 33.8 15.6 L19.7 29.4" fill="none" stroke="#fff" stroke-width="2.6" stroke-linecap="round" stroke-linejoin="round"/></svg>
<svg width="46" height="46" style="left:2465px;top:258px"><path d="M44 26 V12 A10 10 0 0 0 34 2 H12 A10 10 0 0 0 2 12 V34 A10 10 0 0 0 12 44 H26 C36 44 44 36 44 26 C42 26 36 24 32 28 C28 32 28 38 26 44" fill="none" stroke="#fff" stroke-width="2.6" stroke-linejoin="round"/><circle cx="15" cy="16" r="2.4" fill="#fff"/><circle cx="29" cy="16" r="2.4" fill="#fff"/><path d="M13 27 C15 32 19 33 23 32" fill="none" stroke="#fff" stroke-width="2.6"/></svg>
<svg width="44" height="50" style="left:2564px;top:256px"><circle cx="21" cy="12" r="10" fill="none" stroke="#fff" stroke-width="2.6"/><path d="M18 22 V28 M24 22 V28" stroke="#fff" stroke-width="2.4"/><rect x="2" y="28" width="38" height="12" rx="6" fill="none" stroke="#fff" stroke-width="2.6"/><path d="M4 46 H38" stroke="#fff" stroke-width="2.4"/></svg>
<svg width="64" height="52" style="left:2652px;top:255px"><path d="M1 22 L9 30 M9 22 L1 30" stroke="#fff" stroke-width="2.6"/><path d="M1 37 H61" stroke="#fff" stroke-width="2.4"/><path d="M20 48 C18 30 22 10 30 3 C36 -1 38 8 32 20 C28 28 22 34 20 48 C24 36 28 28 32 28 C34 28 34 32 34 34 C37 30 40 29 41 31 C43 31 45 26 48 28 C50 28 52 26 55 24" fill="none" stroke="#fff" stroke-width="2.4" stroke-linejoin="round" stroke-linecap="round"/></svg>
<div class="a" style="left:2741px;top:267px;width:2px;height:28px;background:#555"></div>
<svg width="42" height="46" style="left:2809px;top:259px"><path d="M2 10 A8 8 0 0 1 10 2 H30 L38 13 V36 A8 8 0 0 1 30 44 H10 A8 8 0 0 1 2 36 Z" fill="none" stroke="#7a7a7a" stroke-width="2.4" stroke-linejoin="round"/><path d="M11 2 V8 A4 4 0 0 0 15 12 H25 A4 4 0 0 0 29 8 V2" fill="none" stroke="#7a7a7a" stroke-width="2.4"/><circle cx="20" cy="27" r="6" fill="none" stroke="#7a7a7a" stroke-width="2.4"/></svg>
<svg width="20" height="12" style="left:2876px;top:276px"><path d="M2 2 L10 10 L18 2" fill="none" stroke="#fff" stroke-width="2.4"/></svg>
<div class="a" style="left:2921px;top:252px;width:60px;height:59px;border-radius:46% 54% 50% 48% / 44% 50% 52% 56%;background:linear-gradient(180deg,#6a6df7 0%,#4d86f3 40%,#30a2e6 75%,#2a9fd0 100%);filter:blur(1.2px)"></div>
<svg width="44" height="44" style="left:2929px;top:259px"><g fill="none" stroke="#fff" stroke-width="2.4" stroke-linecap="round"><ellipse cx="22" cy="22" rx="19" ry="10.5" transform="rotate(-20 22 22)"/><ellipse cx="22" cy="22" rx="19" ry="10.5" transform="rotate(70 22 22)"/></g><path d="M22 15.5 L23.8 20.2 L28.5 22 L23.8 23.8 L22 28.5 L20.2 23.8 L15.5 22 L20.2 20.2Z" fill="#fff"/></svg>

<!-- PAGE -->
<div class="a" id="page" style="left:1221px;top:338px;width:1793px;height:1513px;background:#fff;overflow:hidden"></div>
<!-- DOC -->
<div class="a" style="left:1221px;top:338px;width:1793px;height:1513px;overflow:hidden">
<div class="t" id="d1" style="left:147px;top:137.8px;font-size:64px;color:#212529;font-weight:normal;font-family:'Liberation Sans';-webkit-text-stroke:1.3px #212529;">Demo Report</div>
<div class="t" id="d2" style="left:147px;top:225.9px;font-size:45px;color:#5a5e62;font-weight:normal;font-family:'Liberation Sans';transform:scaleX(0.905);transform-origin:0 0;">Situation 1</div>
<div class="t" id="d3" style="left:147px;top:313.9px;font-size:35.5px;color:#212529;font-weight:normal;font-family:'Liberation Sans';">Sample size calculation for a continuous endpoint</div>
<div class="t" id="d4" style="left:148px;top:393.9px;font-size:28px;color:#5a5f64;font-weight:normal;font-family:'Liberation Sans';transform:scaleX(0.93);transform-origin:0 0;">AUTHOR</div>
<div class="t" id="d5" style="left:146px;top:436.5px;font-size:32px;color:#212529;font-weight:normal;font-family:'Liberation Sans';transform:scaleX(0.965);transform-origin:0 0;">Friedrich Pahlke</div>
<div class="t" id="d6" style="left:987px;top:393.9px;font-size:28px;color:#5a5f64;font-weight:normal;font-family:'Liberation Sans';transform:scaleX(0.928);transform-origin:0 0;">AFFILIATION</div>
<div class="t" id="d7" style="left:989px;top:437.1px;font-size:31.3px;color:#212529;font-weight:normal;font-family:'Liberation Sans';transform:scaleX(0.87);transform-origin:0 0;">RPACT</div>
<div class="t" id="d8" style="left:146px;top:515.8px;font-size:28px;color:#5a5f64;font-weight:normal;font-family:'Liberation Sans';transform:scaleX(0.9);transform-origin:0 0;">PUBLISHED</div>
<div class="t" id="d9" style="left:147px;top:559.9px;font-size:32px;color:#212529;font-weight:normal;font-family:'Liberation Sans';transform:scaleX(0.978);transform-origin:0 0;">October 2, 2025</div>
<div class="t" id="d10" style="left:148px;top:684.2px;font-size:64px;color:#212529;font-weight:normal;font-family:'Liberation Sans';-webkit-text-stroke:1.3px #212529;transform:scaleX(1.02);transform-origin:0 0;">Working Environment</div>
<div class="a" style="left:147px;top:785px;width:1643px;height:271px;border:2px solid #eef0f3;border-radius:9px;background:#fefefe"></div>
<div class="t" style="left:170.5px;top:817.0px;font-size:28.75px;font-family:'Liberation Mono';white-space:pre"><span style="color:#5e5e5e"># Load the package `ggplot2`</span></div>
<div class="t" style="left:170.5px;top:863.0px;font-size:28.75px;font-family:'Liberation Mono';white-space:pre"><span style="color:#4758ab">library</span><span style="color:#003b4f">(ggplot2)</span></div>
<div class="t" style="left:170.5px;top:956.0px;font-size:28.75px;font-family:'Liberation Mono';white-space:pre"><span style="color:#5e5e5e"># Load the package `rpact`</span></div>
<div class="t" style="left:170.5px;top:1003.0px;font-size:28.75px;font-family:'Liberation Mono';white-space:pre"><span style="color:#4758ab">library</span><span style="color:#003b4f">(rpact)</span></div>
<div class="t" id="d11" style="left:146px;top:1139.3px;font-size:64px;color:#212529;font-weight:normal;font-family:'Liberation Sans';-webkit-text-stroke:1.3px #212529;transform:scaleX(0.99);transform-origin:0 0;">Design</div>
<div class="a" style="left:147px;top:1241px;width:1643px;height:224px;border:2px solid #eef0f3;border-radius:9px;background:#fefefe"></div>
<div class="t" style="left:170.5px;top:1272.0px;font-size:28.75px;font-family:'Liberation Mono';white-space:pre"><span style="color:#4758ab">getDesignInverseNormal</span><span style="color:#003b4f">(</span><span style="color:#657422">kMax</span><span style="color:#5e5e5e"> = </span><span style="color:#ad0000">2</span><span style="color:#003b4f">)</span><span style="color:#5e5e5e"> |&gt;</span></div>
<div class="t" style="left:170.5px;top:1319.0px;font-size:28.75px;font-family:'Liberation Mono';white-space:pre"><span style="color:#4758ab">  getSampleSizeMeans</span><span style="color:#003b4f">(</span><span style="color:#657422">alternative</span><span style="color:#5e5e5e"> = </span><span style="color:#4758ab">c</span><span style="color:#003b4f">(</span><span style="color:#ad0000">0.3</span><span style="color:#003b4f">, </span><span style="color:#ad0000">0.5</span><span style="color:#003b4f">), </span><span style="color:#657422">stDev</span><span style="color:#5e5e5e"> = </span><span style="color:#ad0000">0.8</span><span style="color:#003b4f">)</span><span style="color:#5e5e5e"> |&gt;</span></div>
<div class="t" style="left:170.5px;top:1365.0px;font-size:28.75px;font-family:'Liberation Mono';white-space:pre"><span style="color:#4758ab">  summary</span><span style="color:#003b4f">()</span><span style="color:#5e5e5e"> |&gt;</span></div>
<div class="t" style="left:170.5px;top:1413.0px;font-size:28.75px;font-family:'Liberation Mono';white-space:pre"><span style="color:#4758ab">  plot</span><span style="color:#003b4f">(</span><span style="color:#657422">type</span><span style="color:#5e5e5e"> = </span><span style="color:#ad0000">5</span><span style="color:#003b4f">, </span><span style="color:#657422">legendPosition</span><span style="color:#5e5e5e"> = </span><span style="color:#20794d">'bottom'</span><span style="color:#003b4f">)</span></div>
</div>
<!-- /DOC --><!-- /DOC --><!-- /DOC --><!-- /DOC --><!-- /DOC --><!-- /DOC --><!-- /DOC --><!-- /DOC -->
<!-- WINDOW_END -->
<div class="a" style="left:0;top:1892px;width:3193px;height:1px;background:#333"></div>
</body></html>
